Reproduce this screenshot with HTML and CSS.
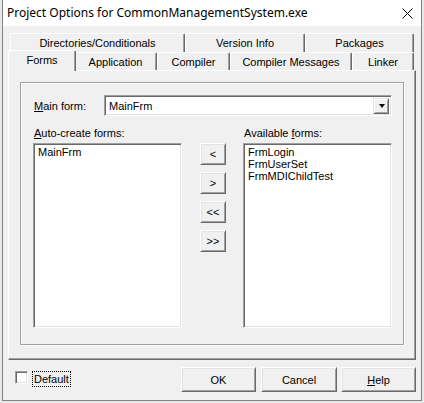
FILE: index.html
```html
<!DOCTYPE html>
<html>
<head>
<meta charset="utf-8">
<link rel="stylesheet" href="styles.css">
</head>
<body>
<div class="desk">
  <div class="window">
    <div class="titlebar">
      <span class="title">Project Options for CommonManagementSystem.exe</span>
      <span class="close"><svg width="11" height="11" viewBox="0 0 11 11"><path d="M0.5 0.5 L10.5 10.5 M10.5 0.5 L0.5 10.5" stroke="#000" stroke-width="1" fill="none"/></svg></span>
    </div>
    <div class="client">
      <div class="tabs">
        <div class="tabrow back">
          <div class="tab t-dirs">Directories/Conditionals</div>
          <div class="tab t-ver">Version Info</div>
          <div class="tab t-pkg">Packages</div>
        </div>
        <div class="tabrow front">
          <div class="tab t-forms selected">Forms</div>
          <div class="tab t-app">Application</div>
          <div class="tab t-comp">Compiler</div>
          <div class="tab t-msg">Compiler Messages</div>
          <div class="tab t-link">Linker</div>
        </div>
      </div>
      <div class="page">
        <div class="group">
          <div class="mainrow">
            <span class="mainlabel"><u>M</u>ain form:</span>
            <div class="combo">
              <span class="combotext">MainFrm</span>
              <span class="dropbtn"><span class="arrow"></span></span>
            </div>
          </div>
          <div class="lists">
            <div class="col">
              <div class="label"><u>A</u>uto-create forms:</div>
              <div class="listbox">
                <div class="item">MainFrm</div>
              </div>
            </div>
            <div class="movecol">
              <div class="btn move">&lt;</div>
              <div class="btn move">&gt;</div>
              <div class="btn move">&lt;&lt;</div>
              <div class="btn move">&gt;&gt;</div>
            </div>
            <div class="col">
              <div class="label">Available <u>f</u>orms:</div>
              <div class="listbox">
                <div class="item">FrmLogin</div>
                <div class="item">FrmUserSet</div>
                <div class="item">FrmMDIChildTest</div>
              </div>
            </div>
          </div>
        </div>
      </div>
      <div class="footer">
        <span class="checkbox"></span>
        <span class="cblabel">Default</span>
        <div class="btn dlg ok">OK</div>
        <div class="btn dlg cancel">Cancel</div>
        <div class="btn dlg help"><u>H</u>elp</div>
      </div>
    </div>
  </div>
</div>
</body>
</html>
```
FILE: styles.css
```css
* { box-sizing: border-box; }
html, body { margin: 0; padding: 0; }
body {
  width: 424px;
  height: 403px;
  overflow: hidden;
  background: #e8e8e8;
  font-family: "Liberation Sans", Arial, sans-serif;
  font-size: 11px;
  color: #000;
}
u { text-decoration: underline; text-underline-offset: 1px; }
.desk { padding-left: 2px; }
.window {
  width: 420px;
  height: 401px;
  border: 1px solid #838383;
  border-top: none;
  background: #f0f0f0;
  display: flex;
  flex-direction: column;
}
.titlebar {
  height: 26px;
  flex: none;
  background: #fff;
  display: flex;
  align-items: center;
  justify-content: space-between;
  padding-left: 4px;
}
.title {
  font-family: "Noto Sans", "Open Sans", sans-serif;
  font-size: 12px;
  color: #000;
  padding-bottom: 1px;
}
.close {
  width: 28px;
  height: 26px;
  display: flex;
  align-items: center;
  justify-content: center;
  padding-top: 1px;
}
.client {
  flex: 1;
  padding: 7px 5px 0 5px;
  display: flex;
  flex-direction: column;
}
.tabs { display: flex; flex-direction: column; }
.tabrow { display: flex; padding-left: 2px; }
.tabrow.back { height: 19px; }
.tabrow.front { height: 18px; align-items: flex-end; }
.tab {
  height: 100%;
  background: #f0f0f0;
  border-left: 1px solid #fff;
  border-top: 1px solid #fff;
  border-right: 1px solid #696969;
  box-shadow: inset -1px 0 0 #a0a0a0;
  border-top-left-radius: 2px;
  border-top-right-radius: 2px;
  display: flex;
  align-items: center;
  justify-content: center;
  white-space: nowrap;
}
.back .tab { padding-bottom: 1px; }
.front .tab { padding-top: 1px; }
.t-dirs { width: 175px; }
.t-ver { width: 120px; }
.t-pkg { width: 109px; }
.t-forms { width: 64px; }
.t-app { width: 83px; }
.t-comp { width: 73px; }
.t-msg { width: 122px; }
.t-link { width: 62px; }
.tab.selected {
  width: 68px;
  height: 21px;
  margin: 0 -2px -1px -2px;
  padding-top: 0;
  padding-bottom: 2px;
  position: relative;
  z-index: 1;
}
.page {
  width: 408px;
  height: 290px;
  border-left: 1px solid #fff;
  border-top: 1px solid #fff;
  border-right: 1px solid #696969;
  border-bottom: 1px solid #696969;
  box-shadow: inset -1px -1px 0 #a0a0a0;
  padding: 11px 10px 0 11px;
}
.group {
  width: 384px;
  height: 263px;
  border: 1px solid #a0a0a0;
  box-shadow: inset 1px 1px 0 #fff, 1px 1px 0 #fff;
  padding: 12px 0 0 12px;
}
.mainrow {
  display: flex;
  align-items: center;
  height: 21px;
}
.mainlabel {
  width: 71px;
  padding-left: 1px;
  flex: none;
}
.combo {
  width: 288px;
  height: 21px;
  background: #fff;
  border: 1px solid;
  border-color: #a0a0a0 #fff #fff #a0a0a0;
  box-shadow: inset 1px 1px 0 #696969, inset -1px -1px 0 #e3e3e3;
  display: flex;
  align-items: center;
  justify-content: space-between;
  padding: 2px 2px 2px 4px;
}
.combotext { padding-top: 1px; }
.dropbtn {
  width: 16px;
  height: 16px;
  background: #f0f0f0;
  border: 1px solid;
  border-color: #e3e3e3 #696969 #696969 #e3e3e3;
  box-shadow: inset 1px 1px 0 #fff, inset -1px -1px 0 #a0a0a0;
  display: flex;
  align-items: center;
  justify-content: center;
}
.arrow {
  width: 0;
  height: 0;
  border-left: 3.5px solid transparent;
  border-right: 3.5px solid transparent;
  border-top: 4px solid #000;
  margin-left: 1px;
}
.lists {
  display: flex;
  margin-top: 11px;
}
.col { width: 149px; display: flex; flex-direction: column; }
.label {
  height: 13px;
  line-height: 13px;
  padding-left: 1px;
  margin-bottom: 3px;
}
.listbox {
  width: 149px;
  height: 185px;
  background: #fff;
  border: 1px solid;
  border-color: #a0a0a0 #fff #fff #a0a0a0;
  box-shadow: inset 1px 1px 0 #696969, inset -1px -1px 0 #e3e3e3;
  padding: 2px 2px 0 4px;
}
.item { height: 12px; line-height: 12px; }
.movecol {
  display: flex;
  flex-direction: column;
  gap: 7px;
  padding-top: 16px;
  margin: 0 17px 0 18px;
}
.btn {
  background: #f0f0f0;
  border: 1px solid;
  border-color: #fff #696969 #696969 #fff;
  box-shadow: inset 1px 1px 0 #e3e3e3, inset -1px -1px 0 #a0a0a0;
  display: flex;
  align-items: center;
  justify-content: center;
}
.move { width: 26px; height: 22px; letter-spacing: 0; }
.footer {
  display: flex;
  align-items: flex-start;
  padding-top: 7px;
}
.checkbox {
  width: 13px;
  height: 13px;
  margin: 4px 0 0 7px;
  background: #fff;
  border: 1px solid;
  border-color: #a0a0a0 #fff #fff #a0a0a0;
  box-shadow: inset 1px 1px 0 #696969, inset -1px -1px 0 #e3e3e3;
}
.cblabel {
  margin: 4px 0 0 4px;
  height: 16px;
  line-height: 14px;
  padding: 0 1px;
  border: 1px dotted #000;
}
.dlg { height: 25px; width: 75px; }
.ok { margin-left: auto; }
.cancel { width: 76px; margin-left: 5px; }
.help { margin-left: 4px; }
```
